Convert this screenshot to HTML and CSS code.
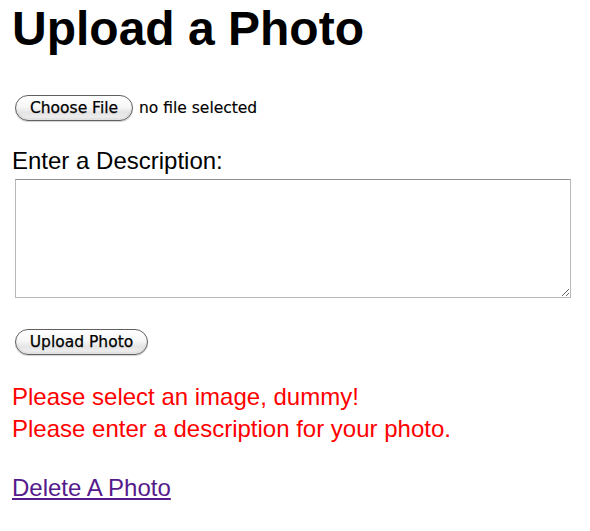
FILE: index.html
```html
<!DOCTYPE html>
<html>
<head>
<meta charset="utf-8">
<title>Upload a Photo</title>
<link rel="stylesheet" href="styles.css">
</head>
<body>
<h1 class="title">Upload a Photo</h1>
<form class="upload-form">
  <div class="file-row">
    <span class="aqua-btn file-btn">Choose File</span>
    <span class="file-status">no file selected</span>
  </div>
  <label class="desc-label" for="desc">Enter a Description:</label>
  <textarea id="desc" class="desc-box"></textarea>
  <div class="submit-row">
    <span class="aqua-btn submit-btn">Upload Photo</span>
  </div>
</form>
<div class="errors">
  <div class="error">Please select an image, dummy!</div>
  <div class="error">Please enter a description for your photo.</div>
</div>
<a class="delete-link" href="#">Delete A Photo</a>
</body>
</html>
```

FILE: styles.css
```css
html, body {
  margin: 0;
  padding: 0;
  background: #ffffff;
}
body {
  padding: 0 12px;
  font-family: "Liberation Sans", Arial, sans-serif;
  font-size: 24px;
  color: #000;
}
.title {
  margin: 1px 0 0;
  font-size: 48px;
  line-height: 56px;
  font-weight: bold;
  color: #000;
}
.upload-form {
  display: flex;
  flex-direction: column;
  align-items: flex-start;
}
.file-row {
  margin-top: 38px;
  display: flex;
  align-items: center;
  gap: 6px;
  margin-left: 3px;
}
.aqua-btn {
  box-sizing: border-box;
  display: inline-flex;
  align-items: center;
  justify-content: center;
  height: 26px;
  padding: 0 10px 1px;
  border: 1.5px solid #606060;
  border-radius: 13px;
  background: linear-gradient(#ffffff 0%, #f7f7f7 45%, #e4e4e4 70%, #f4f4f4 100%);
  box-shadow: inset 0 -2px 2px rgba(0,0,0,0.08), 0 1px 1px rgba(0,0,0,0.18);
  font-family: "DejaVu Sans", sans-serif;
  font-size: 15.5px;
  color: #000;
  -webkit-text-stroke: 0.25px #000;
  white-space: nowrap;
}
.file-btn {
  width: 118px;
}
.file-status {
  font-family: "DejaVu Sans", sans-serif;
  font-size: 15.5px;
  color: #000;
  -webkit-text-stroke: 0.15px #000;
}
.desc-label {
  margin-top: 26px;
  font-size: 24px;
  line-height: 28px;
}
.desc-box {
  box-sizing: border-box;
  margin: 4px 0 0 3px;
  width: 556px;
  height: 119px;
  border: 1.5px solid #b8b8b8;
  border-top-color: #939393;
  background: #fff;
  padding: 2px;
  font-family: "Liberation Sans", sans-serif;
  font-size: 16px;
  outline: none;
}
.submit-row {
  margin-top: 31px;
  margin-left: 3px;
  display: flex;
}
.submit-btn {
  width: 133px;
}
.errors {
  margin-top: 26px;
}
.error {
  color: #ff0000;
  font-size: 24px;
  line-height: 32px;
}
.delete-link {
  display: inline-block;
  margin-top: 27px;
  font-size: 24px;
  line-height: 32px;
  color: #551a8b;
  text-decoration: underline;
}
```
